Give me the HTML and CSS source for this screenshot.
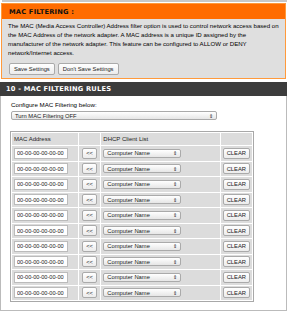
FILE: index.html
```html
<!DOCTYPE html>
<html>
<head>
<meta charset="utf-8">
<title>MAC Filtering</title>
<link rel="stylesheet" href="styles.css">
</head>
<body>
<div class="topline"></div>
<div class="box">
	<h2 class="boxTitle">MAC FILTERING :</h2>
	<div class="boxBody">
		<p>The MAC (Media Access Controller) Address filter option is used to control network access based on the MAC Address of the network adapter. A MAC address is a unique ID assigned by the manufacturer of the network adapter. This feature can be configured to ALLOW or DENY network/Internet access.</p>
		<div class="actions">
			<button class="btn">Save Settings</button>
			<button class="btn">Don't Save Settings</button>
		</div>
	</div>
</div>
<div class="rules">
	<h2 class="rulesTitle">10 - MAC FILTERING RULES</h2>
	<div class="rulesBody">
		<p class="label">Configure MAC Filtering below:</p>
		<div class="fakeSelect modeSelect"><span>Turn MAC Filtering OFF</span><span class="arrows">&#8661;</span></div>
		<table class="macTable">
			<tr class="head">
				<td class="c1">MAC Address</td>
				<td class="c2"></td>
				<td class="c3">DHCP Client List</td>
				<td class="c4"></td>
			</tr>
			<tbody id="rows"></tbody>
		</table>
	</div>
</div>
<script>
	var rows = document.getElementById('rows');
	for (var i = 0; i < 10; i++) {
		var tr = document.createElement('tr');
		tr.innerHTML = '<td class="c1"><input class="mac" type="text" value="00-00-00-00-00-00"></td>' +
			'<td class="c2"><button class="btn small">&lt;&lt;</button></td>' +
			'<td class="c3"><div class="fakeSelect clientSelect"><span>Computer Name</span><span class="arrows">&#8661;</span></div></td>' +
			'<td class="c4"><button class="btn small">CLEAR</button></td>';
		rows.appendChild(tr);
	}
</script>
</body>
</html>
```

FILE: styles.css
```css
*{
	margin: 0;
	padding: 0;
	box-sizing: border-box;
	font-family: "Liberation Sans", Arial, sans-serif;
}
body{
	background: #fff;
	width: 289px;
	height: 316px;
	overflow: hidden;
	color: #000;
	font-size: 6.2px;
}
.topline{
	height: 2px;
	background: #c8c8c8;
	margin: 0 2px;
}
.box{
	margin: 1px 3px 0 1px;
	border: 1px solid #ff9a3c;
	background: #dfdfdf;
}
.boxTitle{
	background: #ff6c00;
	color: #111;
	font-family: "DejaVu Sans", sans-serif;
	font-size: 6.7px;
	font-weight: bold;
	height: 15px;
	line-height: 17px;
	padding-left: 7px;
	letter-spacing: 0.2px;
}
.boxBody{
	padding: 2px 2px 3px 6px;
}
.boxBody p{
	line-height: 9px;
	font-size: 6.1px;
}
.actions{
	display: flex;
	gap: 3px;
	margin-top: 6px;
	padding-left: 1px;
}
.btn{
	background: linear-gradient(#fff, #ececec);
	border: 1px solid #aaa;
	border-radius: 2px;
	font-size: 5.8px;
	height: 12px;
	padding: 0 4px;
	color: #222;
}
.rules{
	margin-top: 3px;
	margin-right: 2px;
}
.rulesTitle{
	background: #3c3c3c;
	color: #fff;
	font-family: "DejaVu Sans", sans-serif;
	font-size: 6.7px;
	font-weight: bold;
	height: 14px;
	line-height: 15px;
	padding-left: 6px;
	letter-spacing: 0.2px;
}
.rulesBody{
	border: 1px solid #bbb;
	border-top: none;
	padding: 4px 0 8px 9px;
}
.label{
	font-size: 6.2px;
	line-height: 9px;
	margin-left: 1px;
}
.fakeSelect{
	display: flex;
	justify-content: space-between;
	align-items: center;
	background: linear-gradient(#fff, #e6e6e6);
	border: 1px solid #aaa;
	border-radius: 2px;
	font-size: 5.8px;
	padding: 0 3px;
	color: #222;
}
.arrows{
	font-size: 5px;
}
.modeSelect{
	width: 206px;
	height: 9px;
	margin-top: 2px;
	margin-left: 1px;
}
.macTable{
	margin-top: 11px;
	border-collapse: separate;
	border-spacing: 1px;
	background: #fff;
	border: 1px solid #a8a8a8;
	width: 244px;
}
.macTable td{
	background: #dcdcdc;
	font-size: 6px;
	padding: 0 2px;
}
.head td{
	height: 12px;
	color: #222;
}
#rows td{
	height: 14.5px;
}
.c1{ width: 67px; }
.c2{ width: 22px; text-align: center; }
.c3{ width: 124px; }
.c4{ width: 30px; text-align: center; }
.mac{
	width: 54px;
	height: 11px;
	border: 1px solid #bbb;
	background: #fff;
	font-size: 5.6px;
	padding-left: 2px;
	color: #222;
	display: block;
}
.small{
	height: 11px;
	padding: 0 3px;
}
.clientSelect{
	width: 78px;
	height: 9px;
}
```
